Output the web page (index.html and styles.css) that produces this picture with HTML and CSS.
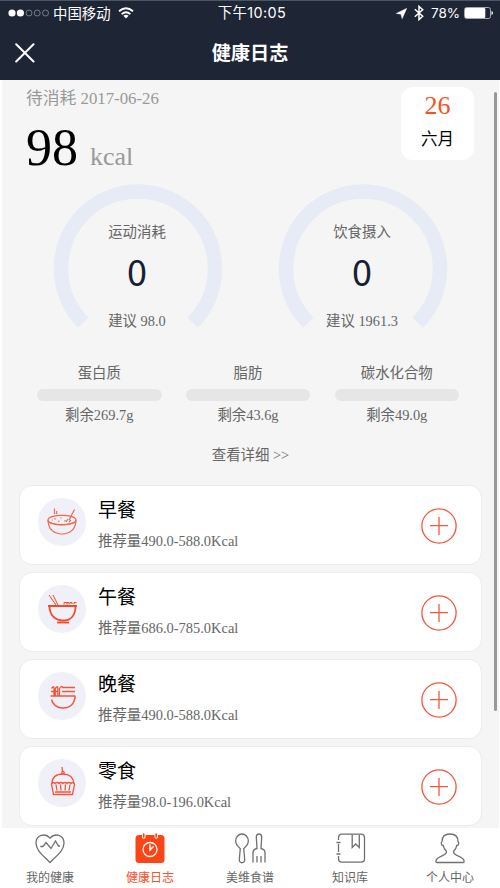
FILE: index.html
```html
<!DOCTYPE html>
<html lang="zh-CN">
<head>
<meta charset="utf-8">
<title>健康日志</title>
<link rel="stylesheet" href="styles.css">
</head>
<body>
<div class="app">
  <header class="header">
    <div class="status">
      <div class="status-left">
        <svg class="signal" width="42" height="10" viewBox="0 0 42 10"><g fill="#fff"><circle cx="4" cy="5" r="3.6"/><circle cx="12.4" cy="5" r="3.6"/></g><g fill="none" stroke="#8b909b" stroke-width=".8"><circle cx="21" cy="5" r="3"/><circle cx="29.2" cy="5" r="3"/><circle cx="37.5" cy="5" r="3"/></g></svg>
        <span class="carrier">中国移动</span>
        <svg class="wifi" width="16" height="12" viewBox="0 0 16 12"><g fill="none" stroke="#fff" stroke-width="1.800"><path d="M1 4.2Q8-1.8 15 4.2"/><path d="M3.6 7.1Q8 3.3 12.4 7.1"/></g><path d="M5.4 8.8Q8 6.7 10.6 8.8L8 11.5Z" fill="#fff"/></svg>
      </div>
      <span class="clock">下午10:05</span>
      <div class="status-right">
        <svg width="11" height="11" viewBox="0 0 11 11"><path d="M10.800.3 6.100 10.800 5 6.200.2 5.400Z" fill="#fff" stroke="#fff" stroke-width=".4"/></svg>
        <svg class="bluetooth" width="10" height="16" viewBox="0 0 10 16"><path d="M.8 4.3 8.7 11.3 5 14.6V1.4L8.7 4.7.8 11.7" fill="none" stroke="#fff" stroke-width="1.5"/></svg>
        <span class="percent">78%</span>
        <svg class="battery" width="29" height="12" viewBox="0 0 29 12"><rect x=".5" y=".5" width="26" height="11" rx="2" fill="none" stroke="#a5a9b2"/><rect x="1" y="1" width="20.3" height="10" rx="1.2" fill="#fff"/><path d="M27.5 4Q29 4.4 29 6T27.500 8Z" fill="#fff"/></svg>
      </div>
    </div>
    <div class="navbar">
      <svg class="close" width="20" height="20" viewBox="0 0 20 20"><path d="M1.200 1.200 18.500 18.500M18.500 1.200 1.200 18.500" stroke="#fff" stroke-width="2" stroke-linecap="round"/></svg>
      <h1>健康日志</h1>
      <span></span>
    </div>
  </header>

  <main class="content">
    <section class="summary">
      <div>
        <div class="pending">待消耗 2017-06-26</div>
        <div class="total">98 <small>kcal</small></div>
      </div>
      <div class="date"><span class="day">26</span><span class="month">六月</span></div>
    </section>

    <section class="gauges">
      <div class="gauge">
        <svg class="arc" viewBox="0 0 170 170"><path d="M30.300 139.700A77 77 0 1 1 139.700 139.700"/></svg>
        <div class="gauge-text"><span>运动消耗</span><strong>0</strong><span>建议 98.0</span></div>
      </div>
      <div class="gauge">
        <svg class="arc" viewBox="0 0 170 170"><path d="M30.300 139.700A77 77 0 1 1 139.700 139.700"/></svg>
        <div class="gauge-text"><span>饮食摄入</span><strong>0</strong><span>建议 1961.3</span></div>
      </div>
    </section>

    <section class="nutrients">
      <div class="nutrient"><span>蛋白质</span><i class="bar"></i><span>剩余269.7g</span></div>
      <div class="nutrient"><span>脂肪</span><i class="bar"></i><span>剩余43.6g</span></div>
      <div class="nutrient"><span>碳水化合物</span><i class="bar"></i><span>剩余49.0g</span></div>
    </section>
    <div class="more">查看详细 &gt;&gt;</div>

    <section class="meals">
      <article class="meal">
        <div class="badge"><svg viewBox="0 0 48 48"><g fill="none" stroke="#f4674c" stroke-width="1.200"><ellipse cx="24" cy="22" rx="14" ry="4.700"/><path d="M10 22C10 31 16 36 24 36S38 31 38 22M11 24.500Q24 29.500 37 24.500"/><path d="M31 22 36.500 11.500M16.500 16V10.500M18.700 16V13"/><path d="M17 20v1.500M23 19.500v1M20 23.500l1.500-.5M27 22v1.500M30 21l-2 3M33 22l-2 2M14 22h1" /></g></svg></div>
        <div class="meal-text"><h2>早餐</h2><p>推荐量490.0-588.0Kcal</p></div>
        <svg class="add" viewBox="0 0 36 36"><circle cx="18" cy="18" r="17.100"/><path d="M9 17.600H27M18 9V27"/></svg>
      </article>
      <article class="meal">
        <div class="badge"><svg viewBox="0 0 48 48"><g fill="none" stroke="#fa4824"><path d="M10 21H39M11.500 21C11.500 30 17 35.500 25 35.500S37.500 30 37.500 21" stroke-width="1.800"/><path d="M19 37.500H31" stroke-width="1.800"/><path d="M11 10 18 20M15 10 20 20M26 19.500V17.500H29V19.500M29 17.500h2v2M32 19v-1.500h2V19M36 19v-1.500h2.500" stroke-width="1"/></g></svg></div>
        <div class="meal-text"><h2>午餐</h2><p>推荐量686.0-785.0Kcal</p></div>
        <svg class="add" viewBox="0 0 36 36"><circle cx="18" cy="18" r="17.100"/><path d="M9 17.600H27M18 9V27"/></svg>
      </article>
      <article class="meal">
        <div class="badge"><svg viewBox="0 0 48 48"><g fill="none" stroke="#f4553a" stroke-width="1.500"><path d="M12.500 24H37.500M37 24V25.500C36 32 32 36 25 36 19 36 14.500 32.500 13.500 27.500"/><path d="M13.500 16.500Q16 13 16 16.500V24M17.300 24V16.500Q19.800 13 19.800 16.500V24M21.500 24V16.500Q23.500 13 24.500 15.500H37M13 19.500H20M24 19.500H37" stroke-width="1.300"/></g></svg></div>
        <div class="meal-text"><h2>晚餐</h2><p>推荐量490.0-588.0Kcal</p></div>
        <svg class="add" viewBox="0 0 36 36"><circle cx="18" cy="18" r="17.100"/><path d="M9 17.600H27M18 9V27"/></svg>
      </article>
      <article class="meal">
        <div class="badge"><svg viewBox="0 0 48 48"><g fill="none" stroke="#f4553a" stroke-width="1.300"><path d="M13.800 25C14 18 18 15 25 15S35.500 19 36 25M24.500 12 24 8"/><circle cx="25" cy="13.500" r="1.200"/><path d="M13.500 25.300Q15 22.500 17 24.500Q19 22.500 21 24.500Q23 22.500 25 24.500Q27 22.500 29 24.500Q31 22.500 33 24.500Q35 22.500 36.500 25.300L34.500 35.500H15.500Z"/><path d="M18 25.500 19 31.500M22.500 25.500 23 31.500M27.500 25.500 27 31.500M32 25.500 31 31.500M17 33H33"/></g></svg></div>
        <div class="meal-text"><h2>零食</h2><p>推荐量98.0-196.0Kcal</p></div>
        <svg class="add" viewBox="0 0 36 36"><circle cx="18" cy="18" r="17.100"/><path d="M9 17.600H27M18 9V27"/></svg>
      </article>
    </section>
    <div class="scrollbar"></div>
  </main>

  <nav class="tabs">
    <a class="tab"><svg viewBox="0 0 32 32"><path d="M16 30.500C10 24 2 19 2 11 2 3 11 .500 16 6 21 .500 30 3 30 11 30 19 22 24 16 30.500Z"/><path d="M6.300 14.500H9L12 10.500 17 16.500 21.500 9 24.500 14H26"/></svg><span>我的健康</span></a>
    <a class="tab active"><svg viewBox="0 0 32 32"><path d="M5 3H8V5.500Q9.700 8 11.500 5.500V3H20.500V5.500Q22.200 8 24 5.500V3H27Q30.500 3 30.500 6.500V27.500Q30.500 31 27 31H5Q1.500 31 1.500 27.500V6.500Q1.500 3 5 3Z" fill="#fc4517" stroke="none"/><path d="M9.700 2V5M22.200 2V5" stroke="#fc4517" stroke-width="1.700" stroke-linecap="round"/><circle cx="16" cy="17.500" r="7" stroke="#fff"/><path d="M16 12.500V18L19.500 14.500" stroke="#fff" stroke-width="1.500"/></svg><span>健康日志</span></a>
    <a class="tab"><svg viewBox="0 0 32 32"><path d="M8 2C4.500 2 1.700 5 1.700 9 1.700 13 4.500 15 6.300 16.500L5.300 27.500C5 31.800 11 31.800 10.700 27.500L9.700 16.500C11.500 15 14.300 13 14.300 9 14.300 5 11.500 2 8 2Z"/><path d="M19 30.500V20.500Q19 17.500 23 16.500L22.300 5Q22.500 2 25 2T27.700 5L27 16.500Q31 17.500 31 20.500V30.500M23 30.500V24M27 30.500V24"/></svg><span>美维食谱</span></a>
    <a class="tab"><svg viewBox="0 0 32 32"><path d="M4.500 8V6Q4.500 2.200 8 2.200H27Q30.500 2.200 30.500 6V26.500Q30.500 30.200 27 30.200H8Q4.500 30.200 4.500 26.500V24M4.500 12V20M2.500 10.500H6.500M2.500 22H6.500"/><path d="M18.200 2.500V15.500L21.700 12 25.300 15.500V2.500"/></svg><span>知识库</span></a>
    <a class="tab"><svg viewBox="0 0 32 32"><path d="M12.500 19.500C10.500 17.500 9.500 15.500 9.300 13.500 7.500 14 6.500 10.500 8 9.500 8 4.500 11 2 16 2S24 4.500 24 9.500C25.500 10.500 24.500 14 22.700 13.500 22.500 15.500 21.500 17.500 19.500 19.500 19 24 29 24 30 28.500Q30.500 30.500 29 30.500H3Q1.500 30.500 2 28.500C3 24 13 24 12.500 19.500Z"/></svg><span>个人中心</span></a>
  </nav>
</div>
</body>
</html>
```
FILE: styles.css
```css
* { box-sizing: border-box; }

body {
  margin: 0;
  background: #fff;
  font-family: "Liberation Serif", "Noto Sans CJK SC", serif;
  color: #666;
}

.app {
  width: 500px;
  height: 888px;
  display: flex;
  flex-direction: column;
  overflow: hidden;
}

svg { display: block; flex: none; }

/* Header */
.header {
  height: 80px;
  flex: none;
  background: #1e2535;
  border-top: 1px solid #495666;
  color: #fff;
  font-family: "Noto Sans CJK SC", sans-serif;
}
.status {
  display: grid;
  grid-template-columns: 1fr auto 1fr;
  align-items: center;
  height: 24px;
  padding: 0 7px 0 8px;
  font-size: 14.400px;
  line-height: 24px;
}
.status-left, .status-right { display: flex; align-items: center; }
.status-right { justify-content: flex-end; }
.carrier { margin-left: 3px; }
.wifi { margin-left: 7px; }
.clock { padding-left: 3px; font-family: Inter, "Noto Sans CJK SC", sans-serif; font-size: 14.400px; letter-spacing: .4px; }
.bluetooth { margin-left: 7px; }
.percent { margin: 0 4px 0 7px; font-family: Inter, sans-serif; font-size: 13.500px; }
.navbar {
  display: grid;
  grid-template-columns: 1fr auto 1fr;
  align-items: center;
  height: 55px;
  padding: 0 15px;
}
h1 { margin: -2px 0 0; font-size: 19.200px; line-height: 28px; font-weight: 700; }

/* Content */
.content {
  position: relative;
  height: 748px;
  flex: none;
  margin: 0 1px 0 2px;
  padding: 7px 17px 0;
  background: #f5f5f5;
  overflow: hidden;
}
.summary { display: flex; justify-content: space-between; padding: 0 8px 0 7px; height: 97px; }
.pending { font-size: 16.800px; line-height: 24px; color: #999; }
.total { font-size: 52px; line-height: 60px; margin-top: 7px; color: #000; }
.total small { font-size: 26px; color: #999; margin-left: -1px; }
.date {
  width: 73px;
  height: 73px;
  border-radius: 12px;
  background: #fff;
  display: flex;
  flex-direction: column;
  align-items: center;
}
.day { font-size: 26px; line-height: 38px; color: #fc4f1e; }
.month { font-size: 16.500px; line-height: 29px; color: #000; }

.gauges { display: flex; justify-content: center; gap: 55px; height: 176px; padding-right: 1px; }
.gauge { display: grid; width: 170px; height: 170px; margin-top: -1px; }
.arc { grid-area: 1 / 1; width: 170px; height: 170px; }
.arc path { fill: none; stroke: #e6ebf6; stroke-width: 14.500; }
.gauge-text {
  grid-area: 1 / 1;
  display: flex;
  flex-direction: column;
  align-items: center;
  padding: 39px 1px 0 0;
  font-size: 14.400px;
  line-height: 20px;
}
.gauge-text strong {
  font: 400 36px/40px "Noto Sans CJK SC", sans-serif;
  color: #162032;
  margin: 8px 0 21px;
}

.nutrients { display: flex; justify-content: space-between; padding: 3px 23px 0 18px; }
.nutrient { width: 124.500px; text-align: center; font-size: 14.400px; line-height: 20px; }
.nutrient span { display: block; }
.bar { display: block; height: 12px; margin: 6px 0 4px; border-radius: 6px; background: #e6e6e6; }
.more { margin: 20px 0 20px; text-align: center; font-size: 14.400px; line-height: 20px; }

.meals { display: flex; flex-direction: column; gap: 7px; }
.meal {
  display: flex;
  align-items: flex-start;
  height: 80px;
  border: 1px solid #ececec;
  border-radius: 13px;
  background: #fff;
  padding: 12px 24px 0 18px;
}
.badge { width: 48px; height: 48px; border-radius: 50%; background: #f0f1f8; }
.meal-text { flex: 1; margin-left: 12px; }
h2 { margin: -1px 0 6px; font-size: 19px; line-height: 28px; font-weight: 400; color: #000; }
.meal-text p { margin: 0; font-size: 14.450px; line-height: 20px; }
.add { width: 36px; height: 36px; margin-top: 9.500px; fill: none; stroke: #f4573d; stroke-width: 1.300; }

.scrollbar {
  position: absolute;
  right: 2px;
  top: 12px;
  width: 3px;
  height: 619px;
  border-radius: 2px;
  background: #999;
}

/* Tab bar */
.tabs { display: grid; grid-template-columns: repeat(5, 100px); height: 60px; padding-top: 4px; background: #fff; }
.tab { display: flex; flex-direction: column; align-items: center; font-size: 12px; line-height: 18px; color: #666; }
.tab svg { width: 32px; height: 32px; fill: none; stroke: #707070; stroke-width: 1.300; }
.tab span { margin-top: 5px; }
.tab.active { color: #fc5028; }
```
